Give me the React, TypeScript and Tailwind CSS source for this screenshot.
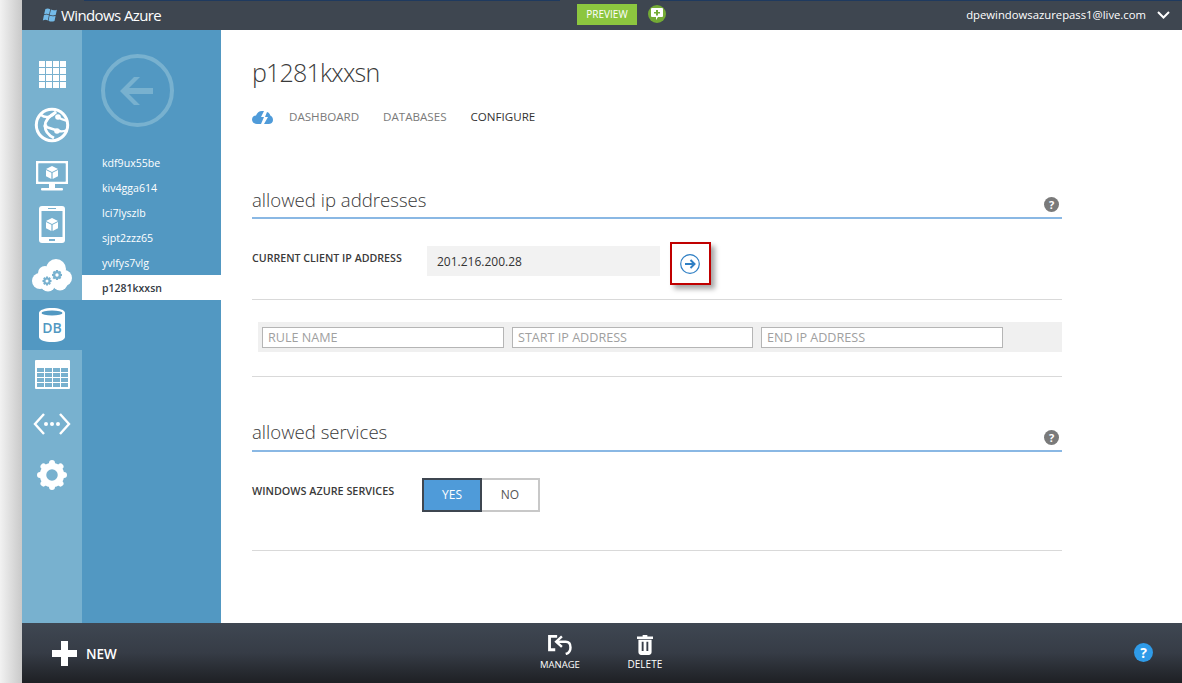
const font = { fontFamily: '"Open Sans", "Liberation Sans", sans-serif' }

const databases = ['kdf9ux55be', 'kiv4gga614', 'lci7lyszlb', 'sjpt2zzz65', 'yvlfys7vlg']

function WindowsFlag() {
  return (
    <svg width="17" height="15" viewBox="0 0 16 14" fill="#74bbe8">
      <path d="M3.200 .8c1.500-.7 3-.7 4.500 .2L6.700 6C5.200 5.100 3.600 5.100 2 5.900z" />
      <path d="M8.400 1.300c1.800 1 3.600 1 5.600.2l-1 4.900c-2 .8-3.900.8-5.700-.2z" />
      <path d="M1.800 6.700c1.600-.8 3.100-.8 4.700 0l-1 5c-1.500-.9-3.100-.9-4.700 0z" />
      <path d="M7.100 7c1.800 1 3.700 1 5.700.2l-1 4.900c-2 .8-3.900.8-5.700-.2z" />
    </svg>
  )
}

function GridIcon() {
  return (
    <div className="grid grid-cols-4 gap-[1px] w-[27px] h-[27px]">
      {Array.from({ length: 16 }).map((_, i) => (
        <div key={i} className="bg-white" />
      ))}
    </div>
  )
}

function WebIcon() {
  return (
    <svg width="36" height="36" viewBox="0 0 36 36" fill="none" stroke="#fff">
      <circle cx="18" cy="18" r="15.700" strokeWidth="3" />
      <path d="M7 8c4 3 10 3 15-3" strokeWidth="2.400" />
      <path d="M22 5c-7 4-11 9-11 14 0 5 3 9 9 12" strokeWidth="2.800" />
      <path d="M22 9c3 2 7 4 11 5" strokeWidth="2.200" />
      <path d="M12 20c4 1 9 3 13 4 2 .5 5 .5 8-1" strokeWidth="2.400" />
      <circle cx="24" cy="10" r="2.800" fill="#fff" stroke="none" />
      <circle cx="23" cy="24" r="2.800" fill="#fff" stroke="none" />
      <circle cx="11.500" cy="19" r="2" fill="#fff" stroke="none" />
    </svg>
  )
}

function Cube({ x, y, s = 1 }: { x: number; y: number; s?: number }) {
  return (
    <g transform={`translate(${x} ${y}) scale(${s})`}>
      <path d="M6 0l6 3-6 3-6-3z" fill="#fff" />
      <path d="M0 4l5.400 2.700V13L0 10.200z" fill="#fff" />
      <path d="M12 4L6.600 6.700V13l5.400-2.800z" fill="#fff" />
    </g>
  )
}

function VmIcon() {
  return (
    <svg width="32" height="30" viewBox="0 0 32 30">
      <path fillRule="evenodd" d="M0 0h32v23H0zM2.500 2.500v18h27v-18z" fill="#fff" />
      <rect x="2.500" y="2.500" width="27" height="18" fill="#78b1cf" />
      <Cube x={10} y={5} />
      <rect x="13" y="23" width="6" height="4" fill="#fff" />
      <rect x="5" y="27" width="22" height="2.500" rx="1" fill="#fff" />
    </svg>
  )
}

function MobileIcon() {
  return (
    <svg width="26" height="37" viewBox="0 0 26 37">
      <rect width="26" height="37" rx="3" fill="#fff" />
      <rect x="2.500" y="5" width="21" height="26" fill="#78b1cf" />
      <Cube x={7} y={12} />
      <rect x="9" y="2" width="8" height="1" fill="#78b1cf" />
      <rect x="10" y="33" width="6" height="2" fill="#78b1cf" />
    </svg>
  )
}

function SmallGear({ cx, cy, r }: { cx: number; cy: number; r: number }) {
  const teeth = [0, 45, 90, 135]
  return (
    <g>
      {teeth.map(a => (
        <rect key={a} x={cx - r * 0.28} y={cy - r * 1.25} width={r * 0.56} height={r * 2.5} fill="#78b1cf" transform={`rotate(${a} ${cx} ${cy})`} />
      ))}
      <circle cx={cx} cy={cy} r={r} fill="#78b1cf" />
      <circle cx={cx} cy={cy} r={r * 0.42} fill="#fff" />
    </g>
  )
}

function CloudIcon() {
  return (
    <svg width="40" height="33" viewBox="0 0 40 33">
      <g fill="#fff">
        <circle cx="8" cy="22" r="8" />
        <circle cx="13" cy="14" r="7" />
        <circle cx="24" cy="10" r="10" />
        <circle cx="32" cy="19" r="8" />
        <circle cx="28" cy="24" r="7.500" />
        <circle cx="16" cy="25" r="7.500" />
      </g>
      <SmallGear cx={15} cy={22} r={3.600} />
      <SmallGear cx={25} cy={16} r={4} />
    </svg>
  )
}

function DbIcon() {
  return (
    <div className="relative w-[26px] h-[34px]">
      <svg width="26" height="34" viewBox="0 0 26 34">
        <path d="M0 5C0 2 6 0 13 0s13 2 13 5v24c0 3-6 5-13 5S0 32 0 29z" fill="#fff" />
        <ellipse cx="13" cy="5" rx="10.500" ry="2.400" fill="#5298c2" />
      </svg>
      <span className="absolute left-0 right-0 top-[12px] text-center text-[14px] leading-[16px] font-semibold text-[#5298c2]">DB</span>
    </div>
  )
}

function TableIcon() {
  return (
    <div className="w-[35px] h-[29px] bg-white rounded-[1px] pt-[8px] px-[2px] pb-[2px]">
      <div className="grid grid-cols-4 grid-rows-4 gap-[1px] w-full h-full">
        {Array.from({ length: 16 }).map((_, i) => (
          <div key={i} className="bg-[#78b1cf]" />
        ))}
      </div>
    </div>
  )
}

function CodeIcon() {
  return (
    <svg width="38" height="22" viewBox="0 0 38 22" fill="none" stroke="#fff" strokeWidth="2.400">
      <path d="M11 1L2 11l9 10M27 1l9 10-9 10" />
      <circle cx="13" cy="11" r="2" fill="#fff" stroke="none" />
      <circle cx="19" cy="11" r="2" fill="#fff" stroke="none" />
      <circle cx="25" cy="11" r="2" fill="#fff" stroke="none" />
    </svg>
  )
}

function GearIcon() {
  return (
    <svg width="30" height="30" viewBox="0 0 30 30">
      <circle cx="15" cy="15" r="9" fill="none" stroke="#fff" strokeWidth="6.500" />
      <g stroke="#fff" strokeWidth="6" strokeLinecap="round">
        <path d="M15 3v1M15 26v1M3 15h1M26 15h1M6.500 6.500l.7.7M22.800 22.800l.7.7M6.500 23.500l.7-.7M22.800 7.200l.7-.7" />
      </g>
    </svg>
  )
}

function HelpDot({ className }: { className: string }) {
  return (
    <span className={`w-[15px] h-[15px] rounded-full bg-[#7a7a7a] text-white text-[11px] leading-[15px] font-bold text-center ${className}`}>?</span>
  )
}

function SectionHeader({ title, helpClass, titleClass }: { title: string; helpClass: string; titleClass: string }) {
  return (
    <div className="h-[29px] border-b-2 border-[#8ab8e4] flex justify-between">
      <h2 className={`text-[18.600px] leading-[26px] font-light text-[#3a3a3a] ${titleClass}`}>{title}</h2>
      <HelpDot className={helpClass} />
    </div>
  )
}

export default function App() {
  return (
    <div style={font} className="w-[1182px] h-[683px] flex overflow-hidden bg-white">
      {/* page shadow */}
      <div className="w-[22px] h-full bg-gradient-to-r from-[#f2f2f2] to-[#c9c9c9]" />

      <div className="w-[1160px] h-full flex flex-col">
        {/* top bar */}
        <div className="h-[30px] bg-[#3e4650] flex items-center relative">
          <div className="absolute top-0 left-[62px] w-[476px] h-[1px] bg-[#1f3a5f]" />
          <div className="absolute top-0 left-[638px] right-0 h-[1px] bg-[#1f3a5f]" />
          <div className="w-[534px] h-full flex items-center pl-[20px] gap-[2px]">
            <WindowsFlag />
            <span className="text-white text-[15px] tracking-[-0.6px]">Windows Azure</span>
          </div>
          <div className="w-[60px] h-[21px] -mt-[2px] ml-[21px] bg-[#8cc63f] text-white text-[10px] flex items-center justify-center">PREVIEW</div>
          <div className="ml-[11px] -mt-[2px] w-[18px] h-[18px] rounded-full bg-[#74ab35] flex items-center justify-center">
            <svg width="12" height="12" viewBox="0 0 12 12">
              <path d="M1 0h10a1 1 0 0 1 1 1v7a1 1 0 0 1-1 1H7l-2 3V9H1a1 1 0 0 1-1-1V1a1 1 0 0 1 1-1z" fill="#fff" />
              <path d="M5 2h2v2h2v1.500H7v2H5v-2H3V4h2z" fill="#74ab35" />
            </svg>
          </div>
          <span className="ml-auto text-white text-[11.300px]">dpewindowsazurepass1@live.com</span>
          <svg className="ml-[11px] mr-[12px]" width="13" height="8" viewBox="0 0 13 8" fill="none" stroke="#fff" strokeWidth="2">
            <path d="M1 1l5.500 5.500L12 1" />
          </svg>
        </div>

        <div className="flex-1 flex min-h-0">
          {/* icon rail */}
          <div className="w-[60px] h-full bg-[#78b1cf] flex flex-col items-center">
            <div className="h-[31px]" />
            <div className="h-[27px] mb-[19px]"><GridIcon /></div>
            <div className="h-[36px] mb-[18px]"><WebIcon /></div>
            <div className="h-[30px] mb-[15px]"><VmIcon /></div>
            <div className="h-[37px] mb-[16px]"><MobileIcon /></div>
            <div className="h-[33px] mb-[8px]"><CloudIcon /></div>
            <div className="w-full h-[50px] bg-[#5298c2] flex items-center justify-center"><DbIcon /></div>
            <div className="h-[29px] mt-[10px] mb-[24px]"><TableIcon /></div>
            <div className="h-[22px] mb-[25px]"><CodeIcon /></div>
            <GearIcon />
          </div>

          {/* database list */}
          <div className="w-[139px] h-full bg-[#5298c2] flex flex-col">
            <div className="h-[120px] pt-[24px] pl-[19px]">
              <div className="w-[73px] h-[73px] rounded-full border-[4px] border-[#78b1cf] flex items-center justify-center">
                <svg className="-ml-[3px]" width="38" height="30" viewBox="0 0 38 30" fill="#78b1cf">
                  <path d="M17 1L3 15l14 14h6L12 18h24v-6H12L23 1z" />
                </svg>
              </div>
            </div>
            {databases.map(name => (
              <div key={name} className="h-[25px] pl-[20px] text-white text-[10.600px] leading-[27px]">{name}</div>
            ))}
            <div className="h-[25px] pl-[20px] bg-white text-[#333a44] text-[10.500px] leading-[27px] font-semibold">p1281kxxsn</div>
          </div>

          {/* main */}
          <div className="flex-1 pl-[31px] pt-[25px]">
            <div className="w-[810px]">
              <h1 className="text-[25px] leading-[34px] font-light tracking-[-0.8px] text-[#3a3a3a]">p1281kxxsn</h1>

              <div className="flex items-center h-[20px] mt-[18px] text-[11.600px] leading-[18px] text-[#7a7a7a]">
                <svg width="21" height="13" viewBox="0 0 21 13" fill="#4f9bd9">
                  <path d="M5 13C2 13 0 11 0 8.500S2 4.500 4 4.500C5 2 7 0 10 0h2L9 6h3l-3 7zM12 13l4-7h-3l2-5c2 .5 3 2 3.300 3.500C20 5 21 7 21 9c0 2.500-2 4-4.500 4z" />
                </svg>
                <span className="ml-[16px] -mt-[1px]">DASHBOARD</span>
                <span className="ml-[24px] -mt-[1px]">DATABASES</span>
                <span className="ml-[24px] -mt-[1px] text-[#333]">CONFIGURE</span>
              </div>

              <div className="mt-[63px]">
                <SectionHeader title="allowed ip addresses" helpClass="mt-[7px] mr-[3px]" titleClass="-mt-[3px]" />
              </div>

              <div className="flex items-start h-[81px] border-b border-[#d9d9d9]">
                <span className="w-[175px] mt-[31px] text-[10.650px] leading-[16px] font-semibold text-[#3a3a3a]">CURRENT CLIENT IP ADDRESS</span>
                <div className="w-[233px] h-[30px] mt-[27px] bg-[#f2f2f2] pl-[10px] text-[12px] leading-[32px] text-[#333]">201.216.200.28</div>
                <div className="w-[41px] h-[43px] ml-[10px] mt-[23px] border-[2px] border-[#c00000] flex items-center justify-center shadow-[4px_4px_5px_rgba(0,0,0,0.35)]">
                  <svg className="-ml-[2px]" width="20" height="20" viewBox="0 0 20 20" fill="none" stroke="#2f7fc4">
                    <circle cx="10" cy="10" r="9.300" strokeWidth="1.200" />
                    <path d="M5 10h9M10.500 6l4 4-4 4" strokeWidth="2" />
                  </svg>
                </div>
              </div>

              <div className="mt-[22px] h-[30px] ml-[6px] bg-[#f0f0f0] flex items-center gap-[8px] pl-[4px]">
                {['RULE NAME', 'START IP ADDRESS', 'END IP ADDRESS'].map((text, i) => (
                  <input
                    key={text}
                    readOnly
                    placeholder={text}
                    className={`h-[21px] ${i === 1 ? 'w-[241px]' : 'w-[242px]'} bg-white border border-[#b5b5b5] px-[5px] text-[12.600px] placeholder:text-[#a0a0a0] outline-none`}
                  />
                ))}
              </div>

              <div className="mt-[24px] border-b border-[#d9d9d9]" />

              <div className="mt-[46px]">
                <SectionHeader title="allowed services" helpClass="mt-[7px] mr-[3px]" titleClass="-mt-[4px]" />
              </div>

              <div className="flex items-start h-[99px] border-b border-[#d9d9d9]">
                <span className="w-[170px] mt-[31px] text-[10.800px] leading-[16px] font-semibold text-[#3a3a3a]">WINDOWS AZURE SERVICES</span>
                <div className="flex mt-[26px]">
                  <div className="w-[60px] h-[34px] bg-[#4f9bd9] border-[2px] border-[#3e4650] text-white text-[12px] leading-[30px] text-center">YES</div>
                  <div className="w-[58px] h-[34px] border-[2px] border-l-0 border-[#c8c8c8] text-[#555] text-[12px] leading-[30px] text-center">NO</div>
                </div>
              </div>
            </div>
          </div>
        </div>

        {/* bottom bar */}
        <div className="h-[60px] bg-gradient-to-b from-[#3f4752] via-[#363c46] to-[#1e2024] flex items-center relative">
          <svg className="ml-[30px]" width="25" height="25" viewBox="0 0 25 25" fill="#fff">
            <path d="M9 0h7v9h9v7h-9v9H9v-9H0V9h9z" />
          </svg>
          <span className="ml-[9px] mt-[2px] text-white text-[13.500px] font-semibold">NEW</span>
          <div className="ml-[423px] w-[40px] flex flex-col items-center -mt-[2px]">
            <svg width="26" height="20" viewBox="0 0 26 21" fill="none" stroke="#fff" strokeWidth="3">
              <path d="M10 1.500H2v14h6" />
              <path d="M15 1.500L9 7l6 5.500" strokeWidth="2.600" />
              <path d="M10 7h9c4 0 5 3 5 6s-2 6-5 7" strokeWidth="2.600" />
            </svg>
            <span className="mt-[4px] text-white text-[9.500px] leading-[11px] whitespace-nowrap">MANAGE</span>
          </div>
          <div className="ml-[45px] w-[40px] flex flex-col items-center -mt-[2px]">
            <svg width="16" height="20" viewBox="0 0 17 21" fill="#fff">
              <path d="M6 0h5v1.500h6V4H0V1.500h6z" />
              <path fillRule="evenodd" d="M1.500 5h14v13c0 2-1 3-3 3h-8c-2 0-3-1-3-3zM5 7v10h2V7zM10 7v10h2V7z" />
            </svg>
            <span className="mt-[4px] text-white text-[10px] leading-[11px] whitespace-nowrap">DELETE</span>
          </div>
          <div className="ml-auto mr-[29px] -mt-[2px] w-[19px] h-[19px] rounded-full bg-[#2f9be8] text-white text-[14px] leading-[19px] font-bold text-center">?</div>
        </div>
      </div>
    </div>
  )
}
